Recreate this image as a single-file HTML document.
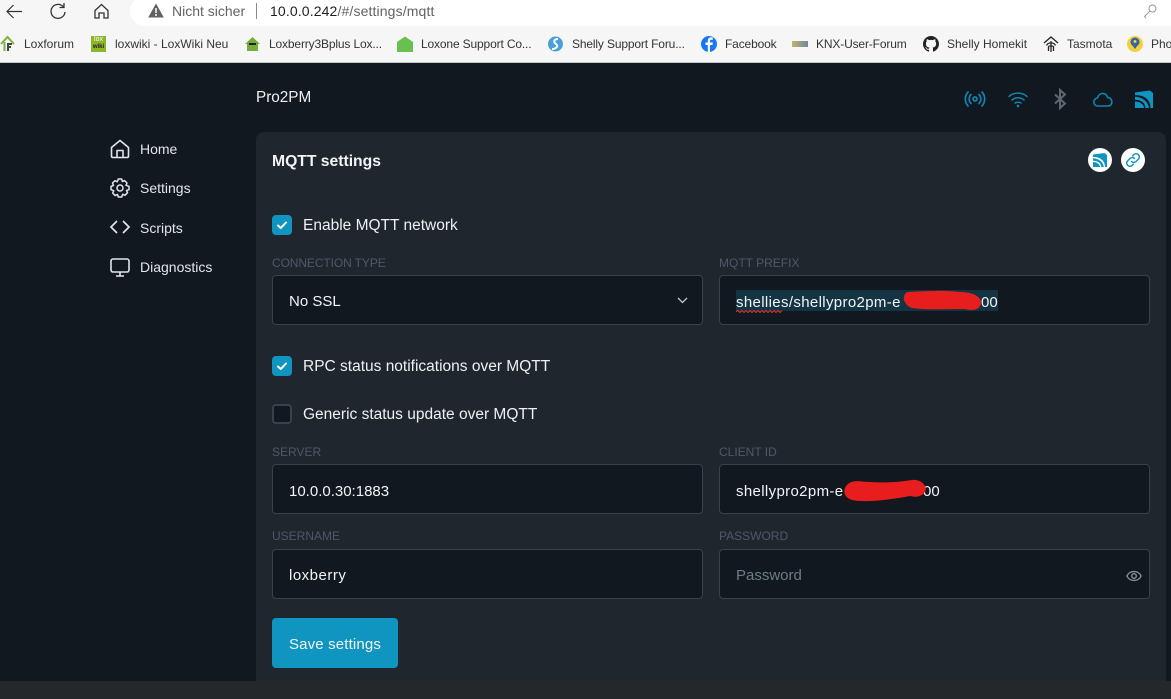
<!DOCTYPE html>
<html><head><meta charset="utf-8"><style>
html,body{margin:0;padding:0}
body{width:1171px;height:699px;position:relative;overflow:hidden;background:#111820;font-family:"Liberation Sans",sans-serif;color:#fff}
.a{position:absolute;white-space:nowrap}
.chrome{left:0;top:0;width:1171px;height:62px;background:#f6f6f6;border-bottom:1px solid #c4c4c4}
.url{left:130px;top:-4px;width:1060px;height:30px;background:#fff;border-radius:15px}
.bm{top:37px;font-size:12px;color:#333;line-height:14px}
.t{letter-spacing:-.15px}
.nav{left:140px;font-size:14px;color:#e3e6e8;line-height:18px}
.panel{left:256px;top:132px;width:910px;height:549px;background:#1f262e;border-radius:8px 8px 0 0}
.bottom{left:0;top:681px;width:1171px;height:18px;background:#25282b}
.lbl{font-size:12px;color:#4d5967;line-height:14px}
.inp{width:429px;height:48px;background:#111820;border:1px solid #36424e;border-radius:4px}
.txt{font-size:15px;line-height:20px;color:#f2f4f5}
.cb{left:272px;width:20px;height:20px;border-radius:4px;background:#1095c1}
.cb svg{position:absolute;left:0;top:0}
.cl{left:303px;font-size:15.5px;line-height:20px;color:#eef0f2}
svg{position:absolute;overflow:visible}
</style></head><body>
<div class="a chrome"></div>
<div class="a url"></div>
<svg style="left:6px;top:4px" width="16" height="16" fill="none" stroke="#333" stroke-width="1.2"><path d="M16 7.500H1M7.500 1L1 7.500 7.500 14"/></svg>
<svg style="left:50px;top:2px" width="16" height="18" fill="none" stroke="#333" stroke-width="1.3"><path d="M13.500 5A7 7 0 1 0 15 10M14 1v4.500H9.500"/></svg>
<svg style="left:94px;top:3px" width="15" height="16" fill="none" stroke="#333" stroke-width="1.3"><path d="M1 7.500L7.500 1.500 14 7.500V15H10V10H5V15H1Z"/></svg>
<svg style="left:148px;top:3px" width="16" height="15"><path d="M8 0.500L15.800 14.500H0.200Z" fill="#5f6368"/><path d="M8 5v5M8 11v2" stroke="#fff" stroke-width="1.500"/></svg>
<div class="a" style="left:172px;top:3px;font-size:14px;color:#5f6368;line-height:16px">Nicht sicher</div>
<div class="a" style="left:256px;top:3px;width:1px;height:16px;background:#8a8a8a"></div>
<div class="a" style="left:270px;top:3px;font-size:14px;letter-spacing:.13px;color:#202124;line-height:16px">10.0.0.242<span style="color:#5f6368">/#/settings/mqtt</span></div>
<svg style="left:1143px;top:4px" width="14" height="14" fill="none" stroke="#999" stroke-width="1"><circle cx="9.500" cy="4.500" r="3.500"/><path d="M7 7L1.500 12.500 3 14"/></svg>

<svg style="left:0;top:36px" width="15" height="16"><path d="M1 8L7.500 1 14 8" fill="none" stroke="#7cb342" stroke-width="2"/><path d="M4.500 6V15" stroke="#7cb342" stroke-width="2"/><path d="M8 15V8H12M8 11H11" stroke="#444" stroke-width="2" fill="none"/></svg>
<div class="a bm" style="left:24px">Loxforum</div>
<div class="a" style="left:91px;top:36px;width:15px;height:16px;background:#8db52a;color:#fff;font-size:7px;line-height:7px;text-align:center">lox<br><span style="color:#222;font-weight:bold;font-size:6px">wiki</span></div>
<div class="a bm" style="left:115px">loxwiki - LoxWiki Neu</div>
<svg style="left:245px;top:37px" width="15" height="14"><path d="M7.500 0L15 7H13V14H2V7H0Z" fill="#74ad3a"/><rect x="4" y="6" width="7" height="2" fill="#222"/></svg>
<div class="a bm t" style="left:269px">Loxberry3Bplus Lox...</div>
<svg style="left:397px;top:36px" width="16" height="16"><path d="M8 0.500L16 6V16H0V6Z" fill="#68c04e"/></svg>
<div class="a bm t" style="left:421px">Loxone Support Co...</div>
<svg style="left:548px;top:36px" width="15" height="16"><circle cx="7.500" cy="8" r="7.500" fill="#4a9fd8"/><path d="M10 3C6 3 5 6 8 8S8 13 4 13" fill="none" stroke="#fff" stroke-width="2"/></svg>
<div class="a bm t" style="left:572px">Shelly Support Foru...</div>
<svg style="left:701px;top:36px" width="16" height="16"><circle cx="8" cy="8" r="8" fill="#1877f2"/><path d="M9 16V9H11.500L11.800 6.500H9V5C9 4 9.500 3.700 10.500 3.700H11.800V1.500C9.500 1 6.800 1.500 6.800 4.700V6.500H4.500V9H6.800V16Z" fill="#fff"/></svg>
<div class="a bm t" style="left:725px">Facebook</div>
<div class="a" style="left:792px;top:41px;width:16px;height:6px;background:linear-gradient(90deg,#c5b070,#6f8a9a)"></div>
<div class="a bm t" style="left:816px">KNX-User-Forum</div>
<svg style="left:923px;top:36px" width="16" height="16" viewBox="0 0 16 16"><path fill="#222" d="M8 0C3.580 0 0 3.580 0 8c0 3.540 2.290 6.530 5.470 7.590.4.070.55-.17.55-.38 0-.19-.01-.82-.01-1.490-2.010.37-2.530-.49-2.690-.94-.09-.23-.48-.94-.82-1.130-.28-.15-.68-.52-.01-.53.63-.01 1.080.58 1.230.82.72 1.210 1.870.87 2.330.66.07-.52.28-.87.51-1.070-1.780-.2-3.640-.89-3.640-3.950 0-.87.31-1.590.82-2.150-.08-.2-.36-1.020.08-2.120 0 0 .67-.21 2.200.82.64-.18 1.320-.27 2-.27.68 0 1.360.09 2 .27 1.530-1.040 2.200-.82 2.200-.82.44 1.100.16 1.920.08 2.120.51.56.82 1.270.82 2.150 0 3.070-1.870 3.750-3.650 3.950.29.25.54.73.54 1.480 0 1.070-.01 1.930-.01 2.200 0 .21.15.46.55.38A8.013 8.013 0 0 0 16 8c0-4.420-3.580-8-8-8z"/></svg>
<div class="a bm" style="left:947px">Shelly Homekit</div>
<svg style="left:1043px;top:36px" width="16" height="16" fill="none" stroke="#222" stroke-width="1.300"><path d="M1 7L8 1 15 7M3.500 9.500C5 6 11 6 12.500 9.500M8 5V16M5.500 15V11C5.500 9.500 10.500 9.500 10.500 11V15"/></svg>
<div class="a bm" style="left:1067px">Tasmota</div>
<svg style="left:1127px;top:36px" width="16" height="16"><circle cx="8" cy="8" r="8" fill="#f4d03f"/><circle cx="8" cy="6" r="4.500" fill="#3465a4"/><path d="M4.500 8L8 13 11.500 8Z" fill="#3465a4"/><circle cx="8" cy="5.500" r="1.500" fill="#f4d03f"/></svg>
<div class="a bm" style="left:1151px">Pho</div>

<div class="a" style="left:256px;top:89px;font-size:15.300px;line-height:18px;color:#eef0f2">Pro2PM</div>
<svg style="left:965px;top:90px" width="20" height="18" fill="none" stroke="#1085ad" stroke-width="1.700" stroke-linecap="round"><circle cx="10" cy="9" r="2"/><path d="M6 4.500a6.500 6.500 0 0 0 0 9M14 4.500a6.500 6.500 0 0 1 0 9M3 2a10.500 10.500 0 0 0 0 14M17 2a10.500 10.500 0 0 1 0 14"/></svg>
<svg style="left:1008px;top:91px" width="20" height="16" fill="none" stroke="#1085ad" stroke-width="1.500" stroke-linecap="round"><path d="M1 5.500C6 1 14 1 19 5.500M4 9C7.500 6 12.500 6 16 9M7 12C8.500 11 11.500 11 13 12"/><circle cx="10" cy="15" r=".6"/></svg>
<svg style="left:1053px;top:89px" width="14" height="20" fill="none" stroke="#5d6972" stroke-width="2"><path d="M2 5.500L12 14.500 7 19V1L12 5.500 2 14.500"/></svg>
<svg style="left:1093px;top:91px" width="20" height="16" fill="none" stroke="#1085ad" stroke-width="1.600"><path d="M5 15C-.5 15-.5 7.500 4.500 7C6 1 13.500 1 14.500 6.500C20 6.500 20.500 15 15 15Z"/></svg>
<svg style="left:1135px;top:90px" width="18" height="18" fill="#1095c1"><path d="M0 2.500L15 0.500 18 3V18H15.500C15.500 9.500 9 4.800 0 5.200Z"/><path d="M0 6.800C7 6.800 13.800 12 13.800 18H10.500C10.500 13 6 9.800 0 9.800Z"/><path d="M0 11.500C5 11.500 9 14.500 9 18H0Z"/></svg>

<svg style="left:110px;top:139px" width="20" height="20" fill="none" stroke="#e3e6e8" stroke-width="1.600" stroke-linejoin="round"><path d="M1.500 8.500L10 1.500 18.500 8.500V17C18.500 18 18 18.500 17 18.500H3C2 18.500 1.500 18 1.500 17ZM7 18.500V11.500H13V18.500"/></svg>
<div class="a nav" style="top:140px">Home</div>
<svg style="left:110px;top:178px" width="20" height="20" fill="none" stroke="#e3e6e8" stroke-width="1.500" stroke-linejoin="round"><circle cx="10" cy="10" r="3"/><path d="M8.300 1H11.700L12.300 3.500 14.500 2.600 17 5 16 7.300 19 8.300V11.700L16.500 12.500 17.500 14.700 15 17.300 12.700 16.300 11.700 19H8.300L7.500 16.500 5 17.500 2.700 15 3.700 12.700 1 11.700V8.300L3.500 7.500 2.500 5 5 2.700 7.300 3.700Z"/></svg>
<div class="a nav" style="top:179px">Settings</div>
<svg style="left:110px;top:220px" width="20" height="14" fill="none" stroke="#e3e6e8" stroke-width="1.700"><path d="M7 1L1 7 7 13M13 1L19 7 13 13"/></svg>
<div class="a nav" style="top:219px">Scripts</div>
<svg style="left:110px;top:258px" width="20" height="19" fill="none" stroke="#e3e6e8" stroke-width="1.600"><rect x="1" y="1" width="18" height="13" rx="2"/><path d="M10 14V18M6 18H14"/></svg>
<div class="a nav" style="top:258px">Diagnostics</div>

<div class="a panel"></div>
<div class="a bottom"></div>
<div class="a" style="left:272px;top:152px;font-size:15.700px;font-weight:bold;line-height:19px;color:#f2f4f5">MQTT settings</div>
<div class="a" style="left:1088px;top:148px;width:24px;height:24px;border-radius:50%;background:#fff"></div>
<svg style="left:1093px;top:153px" width="14" height="14" fill="#1095c1"><path d="M0 1.500L11.500 0 14 2V14H12C12 7.500 7 3.800 0 4Z"/><path d="M0 5.300C5.500 5.300 10.800 9.500 10.800 14H8.300C8.300 10 4.500 7.700 0 7.700Z"/><path d="M0 9C4 9 7 11.500 7 14H0Z"/></svg>
<div class="a" style="left:1121px;top:148px;width:24px;height:24px;border-radius:50%;background:#fff"></div>
<svg style="left:1126px;top:153px" width="14" height="14" fill="none" stroke="#1095c1" stroke-width="1.500" stroke-linecap="round"><path d="M5.500 8.500C7 10 9 9.500 10 8.500L12.500 6C15 3 11 -1 8 1.500L6.800 2.700M8.500 5.500C7 4 5 4.500 4 5.500L1.500 8C-1 11 3 15 6 12.500L7.200 11.300"/></svg>

<div class="a cb" style="top:215px"><svg width="20" height="20" fill="none" stroke="#fff" stroke-width="2" stroke-linecap="round" stroke-linejoin="round"><path d="M6 10.500L8.800 13 14 7.500"/></svg></div>
<div class="a cl" style="top:216px">Enable MQTT network</div>

<div class="a lbl" style="left:272px;top:256px;letter-spacing:-.1px">CONNECTION TYPE</div>
<div class="a inp" style="left:272px;top:275px"></div>
<div class="a txt" style="left:289px;top:292px">No SSL</div>
<svg style="left:677px;top:297px" width="11" height="7" fill="none" stroke="#c3c8cc" stroke-width="1.300"><path d="M1 1L5.500 5.500 10 1"/></svg>

<div class="a lbl" style="left:719px;top:256px">MQTT PREFIX</div>
<div class="a inp" style="left:719px;top:275px"></div>
<div class="a" style="left:736px;top:290px;width:262px;height:21px;background:#143444"></div>
<div class="a txt" style="left:736px;top:293px;letter-spacing:.35px">shellies/shellypro2pm-e</div>
<div class="a txt" style="left:981px;top:293px">00</div>
<svg style="left:736px;top:310px" width="52" height="3" fill="none" stroke="#d33" stroke-width="1"><path d="M0 1.500l2-1 2 2 2-2 2 2 2-2 2 2 2-2 2 2 2-2 2 2 2-2 2 2 2-2 2 2 2-2 2 2 2-2 2 2 2-2 2 2 2-2 2 2 2-2"/></svg>
<svg style="left:900px;top:289px" width="84" height="24"><path d="M8 3C25 2 45 1 60 3 70 3 80 6 81 13 81 21 73 22 65 20 45 20 25 21 12 19 3 16 1 5 8 3Z" fill="#e81d1d"/></svg>

<div class="a cb" style="top:356px"><svg width="20" height="20" fill="none" stroke="#fff" stroke-width="2" stroke-linecap="round" stroke-linejoin="round"><path d="M6 10.500L8.800 13 14 7.500"/></svg></div>
<div class="a cl" style="top:357px">RPC status notifications over MQTT</div>
<div class="a cb" style="top:404px;background:#111820;border:2px solid #36424e;width:16px;height:16px"></div>
<div class="a cl" style="top:405px">Generic status update over MQTT</div>

<div class="a lbl" style="left:272px;top:445px">SERVER</div>
<div class="a inp" style="left:272px;top:464px"></div>
<div class="a txt" style="left:289px;top:482px">10.0.0.30:1883</div>

<div class="a lbl" style="left:719px;top:445px">CLIENT ID</div>
<div class="a inp" style="left:719px;top:464px"></div>
<div class="a txt" style="left:736px;top:482px;letter-spacing:.35px">shellypro2pm-e</div>
<div class="a txt" style="left:923px;top:482px">00</div>
<svg style="left:840px;top:479px" width="88" height="24"><path d="M8 5C14 0 22 3 30 3 45 4 60 3 72 1 82 0 88 8 85 13 80 19 75 18 70 17 55 20 25 24 12 21 2 18 3 9 8 5Z" fill="#e81d1d"/></svg>

<div class="a lbl" style="left:272px;top:529px">USERNAME</div>
<div class="a inp" style="left:272px;top:549px"></div>
<div class="a txt" style="left:289px;top:566px;letter-spacing:.5px">loxberry</div>

<div class="a lbl" style="left:719px;top:529px">PASSWORD</div>
<div class="a inp" style="left:719px;top:549px"></div>
<div class="a txt" style="left:736px;top:566px;color:#6f7b85">Password</div>
<svg style="left:1126px;top:570px" width="16" height="12" fill="none" stroke="#8a949c" stroke-width="1.300"><path d="M0.800 6C4 0 12 0 15.200 6 12 12 4 12 0.800 6Z"/><circle cx="8" cy="6" r="2.300"/></svg>

<div class="a" style="left:272px;top:618px;width:126px;height:50px;background:#1095c1;border-radius:4px"></div>
<div class="a txt" style="left:289px;top:635px;letter-spacing:.15px">Save settings</div>
</body></html>
